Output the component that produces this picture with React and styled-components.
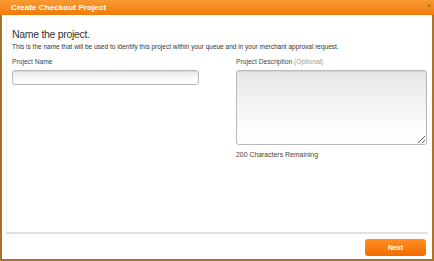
import React from "react";
import styled, { createGlobalStyle } from "styled-components";

const GlobalStyle = createGlobalStyle`
  html, body {
    margin: 0;
    padding: 0;
    background: #fff;
  }
  body {
    font-family: "Liberation Sans", Arial, sans-serif;
  }
`;

const App = () => {
  return (
    <>
      <GlobalStyle />
      <Dialog>
        <TitleBar>
          <Title>Create Checkout Project</Title>
          <Close>×</Close>
        </TitleBar>
        <Body>
          <Heading>Name the project.</Heading>
          <Intro>
            This is the name that will be used to identify this project within
            your queue and in your merchant approval request.
          </Intro>
          <Columns>
            <Field>
              <Label>Project Name</Label>
              <TextInput type="text" />
            </Field>
            <Field>
              <Label>
                Project Description <Muted>(Optional)</Muted>
              </Label>
              <TextArea />
              <Hint>200 Characters Remaining</Hint>
            </Field>
          </Columns>
        </Body>
        <Footer>
          <NextButton>Next</NextButton>
        </Footer>
      </Dialog>
    </>
  );
};

export default App;

const Dialog = styled.div`
  box-sizing: border-box;
  width: 434px;
  height: 261px;
  display: flex;
  flex-direction: column;
  border: 2px solid #a8742c;
  border-top: none;
  background: #fff;
`;

const TitleBar = styled.div`
  display: flex;
  align-items: center;
  justify-content: space-between;
  height: 15px;
  margin: 0 -2px;
  padding: 0 3px 0 11px;
  background: linear-gradient(#f99b35, #f27a0a);
`;

const Title = styled.span`
  color: #fff;
  font-size: 8px;
  font-weight: bold;
  font-family: "Liberation Sans", Arial, sans-serif;
  letter-spacing: 0.1px;
`;

const Close = styled.span`
  color: #9a5a20;
  font-size: 7px;
  line-height: 1;
  align-self: flex-start;
  margin-top: 2px;
`;

const Body = styled.div`
  flex: 1;
  margin: 0 4px;
  padding: 12px 1px 0 5px;
  border-left: 1px solid #f0f0f0;
  border-bottom: 2px solid #e0e0e0;
`;

const Heading = styled.h1`
  margin: 0;
  font-size: 10.5px;
  line-height: 14px;
  letter-spacing: -0.3px;
  font-weight: normal;
  color: #333;
`;

const Intro = styled.p`
  margin: 2px 0 0;
  font-size: 6.5px;
  line-height: 8px;
  color: #333;
`;

const Columns = styled.div`
  display: grid;
  grid-template-columns: 187px 191px;
  column-gap: 37px;
  margin-top: 7px;
`;

const Field = styled.div`
  display: flex;
  flex-direction: column;
`;

const Label = styled.label`
  font-size: 6.7px;
  line-height: 8px;
  color: #444;
  margin-bottom: 4px;
`;

const Muted = styled.span`
  color: #999;
`;

const TextInput = styled.input`
  box-sizing: border-box;
  height: 15px;
  margin: 0;
  border: 1px solid #b8b8b8;
  border-radius: 3px;
  background: linear-gradient(#e9e9e9, #fdfdfd 70%);
  box-shadow: inset 0 1px 1px rgba(0, 0, 0, 0.08);
`;

const TextArea = styled.textarea`
  box-sizing: border-box;
  height: 75px;
  margin: 0;
  border: 1px solid #b8b8b8;
  border-radius: 3px;
  background: linear-gradient(#e6e6e6, #fdfdfd 80%);
  box-shadow: inset 0 1px 1px rgba(0, 0, 0, 0.08);
`;

const Hint = styled.span`
  margin-top: 6px;
  font-size: 6.9px;
  line-height: 8px;
  color: #444;
`;

const Footer = styled.div`
  display: flex;
  justify-content: flex-end;
  align-items: center;
  height: 25px;
  padding: 0 6px 0 0;
`;

const NextButton = styled.button`
  width: 61px;
  height: 17px;
  margin-top: 2px;
  padding: 0;
  border: none;
  border-radius: 3px;
  background: linear-gradient(#ff8e22, #f26c00);
  color: #fff;
  font-family: "Liberation Sans", Arial, sans-serif;
  font-size: 7px;
  font-weight: bold;
  cursor: pointer;
`;
